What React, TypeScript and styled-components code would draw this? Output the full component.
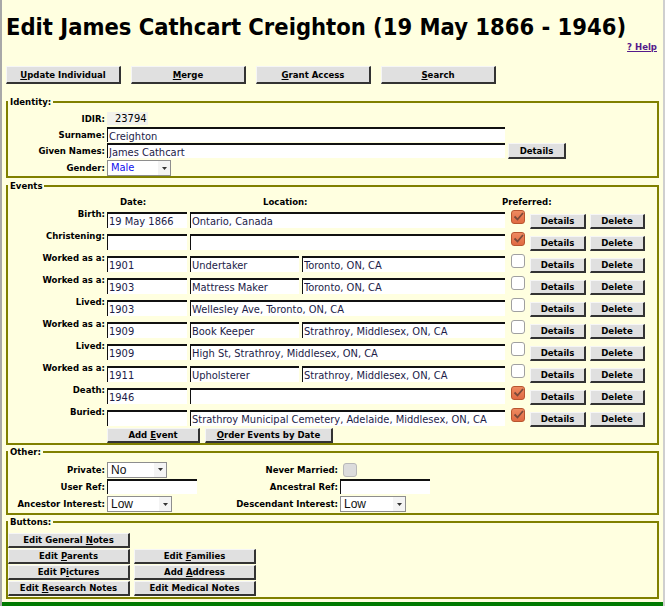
import React from "react";
import styled, { createGlobalStyle } from "styled-components";

const Global = createGlobalStyle`
  html, body { margin: 0; padding: 0; background: #ffffe0; }
  body {
    font-family: "DejaVu Sans Condensed", "DejaVu Sans", sans-serif;
    font-stretch: condensed;
    color: #000;
  }
`;

const Page = styled.div`
  box-sizing: border-box;
  width: 665px;
  height: 606px;
  border-left: 2px solid #a8a8a8;
  border-right: 2px solid #cfcfcf;
  display: flex;
  flex-direction: column;
  overflow: hidden;
  background: #ffffe0;
`;

const Title = styled.h1`
  margin: 14px 0 0 4px;
  font-size: 23.5px;
  line-height: 27px;
  font-weight: bold;
  white-space: nowrap;
`;

const HelpRow = styled.div`
  display: flex;
  justify-content: flex-end;
  padding-right: 6px;
  font-size: 9.5px;
  line-height: 12px;
  font-weight: bold;
`;

const HelpLink = styled.a`
  color: #551a8b;
  text-decoration: underline;
`;

const TopBar = styled.div`
  display: flex;
  gap: 10px;
  margin: 13px 0 0 4px;
`;

const Btn = styled.button<{ $w: number; $h?: number }>`
  box-sizing: border-box;
  width: ${(p) => p.$w}px;
  height: ${(p) => p.$h ?? 15}px;
  margin: 0;
  padding: 0;
  flex: none;
  background: #e0e0e0;
  border-style: solid;
  border-width: 1px 2px 2px 1px;
  border-color: #f6f6f6 #333 #333 #f6f6f6;
  font-family: inherit;
  font-stretch: condensed;
  font-size: 9.5px;
  font-weight: bold;
  color: #000;
  line-height: 1;
  text-align: center;
  white-space: nowrap;
  cursor: pointer;
`;

const Section = styled.fieldset<{ $mt: number }>`
  margin: ${(p) => p.$mt}px 4px 0;
  padding: 0;
  border: 2px solid #808000;
  min-width: 0;
`;

const Legend = styled.legend`
  font-size: 9.5px;
  line-height: 12px;
  font-weight: bold;
  padding: 0 2px;
  margin-left: 0;
`;

const Label = styled.div`
  font-size: 9.5px;
  font-weight: bold;
  text-align: right;
  white-space: nowrap;
`;

/* ---------- identity ---------- */
const IdentityGrid = styled.div`
  display: grid;
  grid-template-columns: 97px 1fr;
  grid-template-rows: 15px 16px 17px 16px;
  column-gap: 2px;
  align-items: start;
  padding-top: 4px;
`;

const IdLabel = styled(Label)<{ $lh: number }>`
  line-height: ${(p) => p.$lh}px;
`;

const IdirBox = styled.div`
  box-sizing: border-box;
  width: 41px;
  height: 13px;
  padding-left: 8px;
  background: #f2f2ec;
  font-size: 11px;
  line-height: 13px;
`;

const TextField = styled.input<{ $w: number; $h?: number }>`
  box-sizing: border-box;
  width: ${(p) => p.$w}px;
  height: ${(p) => p.$h ?? 16}px;
  flex: none;
  margin: 0;
  padding: 1px 0 0 1px;
  background: #fff;
  border: none;
  border-top: 2px solid #111;
  border-left: 1px solid #111;
  font-family: inherit;
  font-stretch: condensed;
  font-size: 11px;
  color: #1c1c48;
  outline: none;
`;

const FieldLine = styled.div`
  display: flex;
  align-items: flex-start;
  gap: 3px;
`;

const SelectBox = styled.div<{ $w: number; $blue?: boolean; $font?: string }>`
  box-sizing: border-box;
  width: ${(p) => p.$w}px;
  height: 16px;
  display: flex;
  background: #fff;
  border: 1px solid #8e8e8e;
  font-family: ${(p) => p.$font ?? "inherit"};
  font-size: ${(p) => (p.$font ? "12px" : "11px")};
  color: ${(p) => (p.$blue ? "#1010ee" : "#111")};
`;

const SelectValue = styled.span`
  flex: 1;
  padding-left: 3px;
  line-height: 14px;
  overflow: hidden;
  white-space: nowrap;
`;

const SelectArrow = styled.span`
  width: 12px;
  display: flex;
  align-items: center;
  justify-content: center;
  background: #f4f4f4;
`;

function Select({ w, value, blue, font }: { w: number; value: string; blue?: boolean; font?: string }) {
  return (
    <SelectBox $w={w} $blue={blue} $font={font}>
      <SelectValue>{value}</SelectValue>
      <SelectArrow>
        <svg width="5" height="3" viewBox="0 0 5 3">
          <path d="M0 0 H5 L2.5 3 Z" fill="#333" />
        </svg>
      </SelectArrow>
    </SelectBox>
  );
}

/* ---------- checkbox ---------- */
const CheckBox = styled.span<{ $on?: boolean; $disabled?: boolean }>`
  box-sizing: border-box;
  flex: none;
  width: 14px;
  height: 14px;
  border-radius: 3px;
  display: inline-flex;
  align-items: center;
  justify-content: center;
  background: ${(p) =>
    p.$disabled ? "#dcdcdc" : p.$on ? "linear-gradient(#ee8a60, #e06a42)" : "#fff"};
  border: 1px solid ${(p) => (p.$disabled ? "#b8b8b8" : p.$on ? "#b8552f" : "#a0a0a0")};
`;

function Check({ on, disabled }: { on?: boolean; disabled?: boolean }) {
  return (
    <CheckBox $on={on} $disabled={disabled}>
      {on && (
        <svg width="11" height="10" viewBox="0 0 11 10">
          <path d="M1.5 4.5 L4.5 7.5 L10 1" fill="none" stroke="#7a4a3a" strokeWidth="1.8" />
        </svg>
      )}
    </CheckBox>
  );
}

/* ---------- events ---------- */
const EventsBody = styled.div`
  padding-top: 4px;
`;

const HeaderRow = styled.div`
  display: flex;
  height: 12px;
  font-size: 9.5px;
  line-height: 12px;
  font-weight: bold;
`;

const HeadCell = styled.div<{ $w: number; $pl: number }>`
  width: ${(p) => p.$w}px;
  padding-left: ${(p) => p.$pl}px;
  box-sizing: border-box;
  flex: none;
  white-space: nowrap;
`;

const EventRow = styled.div`
  display: flex;
  align-items: flex-start;
  height: 22px;
`;

const EventLabel = styled(Label)`
  width: 97px;
  margin-right: 2px;
  line-height: 12px;
  flex: none;
`;

const EventFields = styled(FieldLine)`
  width: 398px;
  margin-top: 4px;
  flex: none;
`;

const PrefCell = styled.div`
  margin: 2px 0 0 6px;
  display: flex;
`;

const RowButtons = styled.div`
  display: flex;
  gap: 4px;
  margin: 6px 0 0 5px;
`;

const EventActions = styled.div`
  display: flex;
  gap: 5px;
  margin-left: 99px;
`;

/* ---------- other ---------- */
const OtherGrid = styled.div`
  display: grid;
  grid-template-columns: 97px 127px 102px auto;
  grid-template-rows: 17px 17px 18px;
  column-gap: 2px;
  align-items: center;
  padding-top: 3px;
`;

const OtherLabel = styled(Label)`
  line-height: 12px;
`;

const NeverCell = styled.div`
  display: flex;
  padding-left: 3px;
`;

/* ---------- buttons ---------- */
const ButtonGrid = styled.div`
  display: grid;
  grid-template-columns: 122px 122px;
  grid-auto-rows: 15px;
  column-gap: 4px;
  row-gap: 1px;
  padding: 5px 0 1px;
`;

const GreenBar = styled.div`
  margin-top: auto;
  height: 4px;
  background: #007a00;
  flex: none;
`;

type Ev = { label: string; date: string; occ?: string; loc: string; pref?: boolean };

const events: Ev[] = [
  { label: "Birth:", date: "19 May 1866", loc: "Ontario, Canada", pref: true },
  { label: "Christening:", date: "", loc: "", pref: true },
  { label: "Worked as a:", date: "1901", occ: "Undertaker", loc: "Toronto, ON, CA" },
  { label: "Worked as a:", date: "1903", occ: "Mattress Maker", loc: "Toronto, ON, CA" },
  { label: "Lived:", date: "1903", loc: "Wellesley Ave, Toronto, ON, CA" },
  { label: "Worked as a:", date: "1909", occ: "Book Keeper", loc: "Strathroy, Middlesex, ON, CA" },
  { label: "Lived:", date: "1909", loc: "High St, Strathroy, Middlesex, ON, CA" },
  { label: "Worked as a:", date: "1911", occ: "Upholsterer", loc: "Strathroy, Middlesex, ON, CA" },
  { label: "Death:", date: "1946", loc: "", pref: true },
  {
    label: "Buried:",
    date: "",
    loc: "Strathroy Municipal Cemetery, Adelaide, Middlesex, ON, CA",
    pref: true,
  },
];

export default function App() {
  return (
    <>
      <Global />
      <Page>
        <Title>Edit James Cathcart Creighton (19 May 1866 - 1946)</Title>
        <HelpRow>
          <HelpLink href="#">? Help</HelpLink>
        </HelpRow>
        <TopBar>
          <Btn $w={115} $h={18}>
            <u>U</u>pdate Individual
          </Btn>
          <Btn $w={115} $h={18}>
            <u>M</u>erge
          </Btn>
          <Btn $w={115} $h={18}>
            <u>G</u>rant Access
          </Btn>
          <Btn $w={115} $h={18}>
            <u>S</u>earch
          </Btn>
        </TopBar>

        <Section $mt={12}>
          <Legend>Identity:</Legend>
          <IdentityGrid>
            <IdLabel $lh={13}>IDIR:</IdLabel>
            <IdirBox>23794</IdirBox>
            <IdLabel $lh={15}>Surname:</IdLabel>
            <TextField $w={398} $h={15} defaultValue="Creighton" />
            <IdLabel $lh={15}>Given Names:</IdLabel>
            <FieldLine>
              <TextField $w={398} $h={15} defaultValue="James Cathcart" />
              <Btn $w={58} $h={16}>Details</Btn>
            </FieldLine>
            <IdLabel $lh={16}>Gender:</IdLabel>
            <Select w={64} value="Male" blue />
          </IdentityGrid>
        </Section>

        <Section $mt={2}>
          <Legend>Events</Legend>
          <EventsBody>
            <HeaderRow>
              <HeadCell $w={99} $pl={0} />
              <HeadCell $w={83} $pl={13}>Date:</HeadCell>
              <HeadCell $w={312} $pl={73}>Location:</HeadCell>
              <HeadCell $w={80} $pl={0}>Preferred:</HeadCell>
            </HeaderRow>
            {events.map((e, i) => (
              <EventRow key={i}>
                <EventLabel>{e.label}</EventLabel>
                <EventFields>
                  <TextField $w={80} defaultValue={e.date} />
                  {e.occ !== undefined ? (
                    <>
                      <TextField $w={109} defaultValue={e.occ} />
                      <TextField $w={203} defaultValue={e.loc} />
                    </>
                  ) : (
                    <TextField $w={315} defaultValue={e.loc} />
                  )}
                </EventFields>
                <PrefCell>
                  <Check on={e.pref} />
                </PrefCell>
                <RowButtons>
                  <Btn $w={56}>Details</Btn>
                  <Btn $w={55}>Delete</Btn>
                </RowButtons>
              </EventRow>
            ))}
            <EventActions>
              <Btn $w={93}>
                Add <u>E</u>vent
              </Btn>
              <Btn $w={128}>
                <u>O</u>rder Events by Date
              </Btn>
            </EventActions>
          </EventsBody>
        </Section>

        <Section $mt={1}>
          <Legend>Other:</Legend>
          <OtherGrid>
            <OtherLabel>Private:</OtherLabel>
            <Select w={60} value="No" font='"Liberation Sans", Arial, sans-serif' />
            <OtherLabel>Never Married:</OtherLabel>
            <NeverCell>
              <Check disabled />
            </NeverCell>
            <OtherLabel>User Ref:</OtherLabel>
            <TextField $w={90} $h={15} defaultValue="" />
            <OtherLabel>Ancestral Ref:</OtherLabel>
            <TextField $w={90} $h={15} defaultValue="" />
            <OtherLabel>Ancestor Interest:</OtherLabel>
            <Select w={65} value="Low" font='"Liberation Sans", Arial, sans-serif' />
            <OtherLabel>Descendant Interest:</OtherLabel>
            <Select w={66} value="Low" font='"Liberation Sans", Arial, sans-serif' />
          </OtherGrid>
        </Section>

        <Section $mt={1}>
          <Legend>Buttons:</Legend>
          <ButtonGrid>
            <Btn $w={122}>
              Edit General <u>N</u>otes
            </Btn>
            <span />
            <Btn $w={122}>
              Edit <u>P</u>arents
            </Btn>
            <Btn $w={122}>
              Edit <u>F</u>amilies
            </Btn>
            <Btn $w={122}>
              Edit P<u>i</u>ctures
            </Btn>
            <Btn $w={122}>
              Add <u>A</u>ddress
            </Btn>
            <Btn $w={122}>
              Edit <u>R</u>esearch Notes
            </Btn>
            <Btn $w={122}>Edit Medical Notes</Btn>
          </ButtonGrid>
        </Section>
        <GreenBar />
      </Page>
    </>
  );
}
